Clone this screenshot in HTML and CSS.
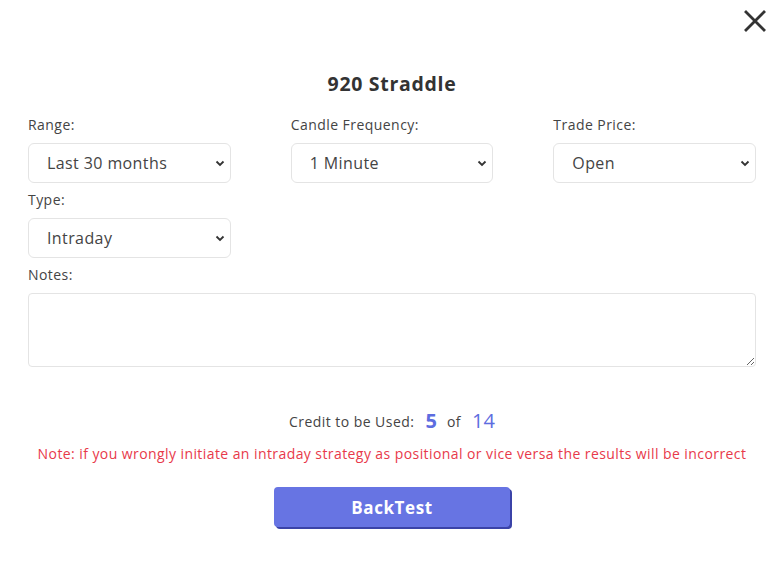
FILE: index.html
```html
<!DOCTYPE html>
<html>
<head>
<meta charset="utf-8">
<link rel="stylesheet" href="styles.css">
</head>
<body>
<div class="modal">
  <button class="close" aria-label="Close">
    <svg width="22" height="22" viewBox="0 0 22 22"><path d="M2 2 L20 20 M20 2 L2 20" stroke="#333" stroke-width="2.8" stroke-linecap="square"/></svg>
  </button>
  <h2 class="title">920 Straddle</h2>
  <div class="grid">
    <div class="field">
      <label class="label">Range:</label>
      <div class="select-wrap">
        <select class="select"><option>Last 30 months</option></select>
        <svg class="chev" width="10" height="7" viewBox="0 0 10 7"><path d="M1.5 1.5 L5 5 L8.5 1.5" fill="none" stroke="#333" stroke-width="1.8"/></svg>
      </div>
    </div>
    <div class="field">
      <label class="label">Candle Frequency:</label>
      <div class="select-wrap">
        <select class="select"><option>1 Minute</option></select>
        <svg class="chev" width="10" height="7" viewBox="0 0 10 7"><path d="M1.5 1.5 L5 5 L8.5 1.5" fill="none" stroke="#333" stroke-width="1.8"/></svg>
      </div>
    </div>
    <div class="field">
      <label class="label">Trade Price:</label>
      <div class="select-wrap">
        <select class="select"><option>Open</option></select>
        <svg class="chev" width="10" height="7" viewBox="0 0 10 7"><path d="M1.5 1.5 L5 5 L8.5 1.5" fill="none" stroke="#333" stroke-width="1.8"/></svg>
      </div>
    </div>
    <div class="field">
      <label class="label">Type:</label>
      <div class="select-wrap">
        <select class="select"><option>Intraday</option></select>
        <svg class="chev" width="10" height="7" viewBox="0 0 10 7"><path d="M1.5 1.5 L5 5 L8.5 1.5" fill="none" stroke="#333" stroke-width="1.8"/></svg>
      </div>
    </div>
  </div>
  <div class="notes">
    <label class="label">Notes:</label>
    <textarea class="textarea"></textarea>
  </div>
  <p class="credit">Credit to be Used: <b class="num used">5</b> of <span class="num total">14</span></p>
  <p class="warn">Note: if you wrongly initiate an intraday strategy as positional or vice versa the results will be incorrect</p>
  <div class="actions">
    <button class="btn">BackTest</button>
  </div>
</div>
</body>
</html>
```

FILE: styles.css
```css
* { box-sizing: border-box; }
html, body { margin: 0; background: #fff; }
body { font-family: "Open Sans", "Noto Sans", sans-serif; color: #444; letter-spacing: 0.45px; }
.modal { position: relative; padding: 70px 28px 0 28px; width: 784px; height: 588px; }
.close { position: absolute; top: 10px; right: 18px; background: none; border: 0; padding: 0; width: 22px; height: 22px; cursor: pointer; }
.title { margin: 0; text-align: center; font-size: 19.5px; line-height: 28px; font-weight: 700; color: #333; letter-spacing: 0.7px; }
.grid { margin-top: 18px; display: grid; grid-template-columns: repeat(3, 1fr); column-gap: 60px; row-gap: 8px; }
.field { display: flex; flex-direction: column; }
.label { font-size: 14px; line-height: 18px; color: #444; margin-bottom: 9px; }
.select-wrap { position: relative; }
.select { appearance: none; -webkit-appearance: none; width: 100%; height: 40px; border: 1px solid #e4e4e4; border-radius: 6px; background: #fff; padding: 0 18px; font-family: inherit; font-size: 16px; color: #444; letter-spacing: 0.4px; }
.chev { position: absolute; right: 6px; top: 17px; pointer-events: none; }
.notes { margin-top: 8px; display: flex; flex-direction: column; }
.textarea { width: 100%; height: 74px; border: 1px solid #e4e4e4; border-radius: 4px; resize: vertical; font-family: inherit; }
.credit { margin: 38px 0 0; text-align: center; font-size: 14px; line-height: 32px; color: #444; }
.num { color: #5d6de0; font-size: 20px; vertical-align: -1px; letter-spacing: 0; }
.used { font-weight: 700; margin: 0 6px 0 7px; }
.total { font-weight: 400; margin-left: 7px; }
.warn { margin: 0; text-align: center; font-size: 14px; line-height: 32px; color: #e8394a; letter-spacing: 0.42px; }
.actions { margin-top: 17px; display: flex; justify-content: center; }
.btn { width: 236px; height: 40px; background: #6774e3; color: #fff; border: 0; border-radius: 4px; box-shadow: 2px 2px 0 #3b43a8; font-family: inherit; font-size: 17px; font-weight: 700; letter-spacing: 0.6px; cursor: pointer; }
```
